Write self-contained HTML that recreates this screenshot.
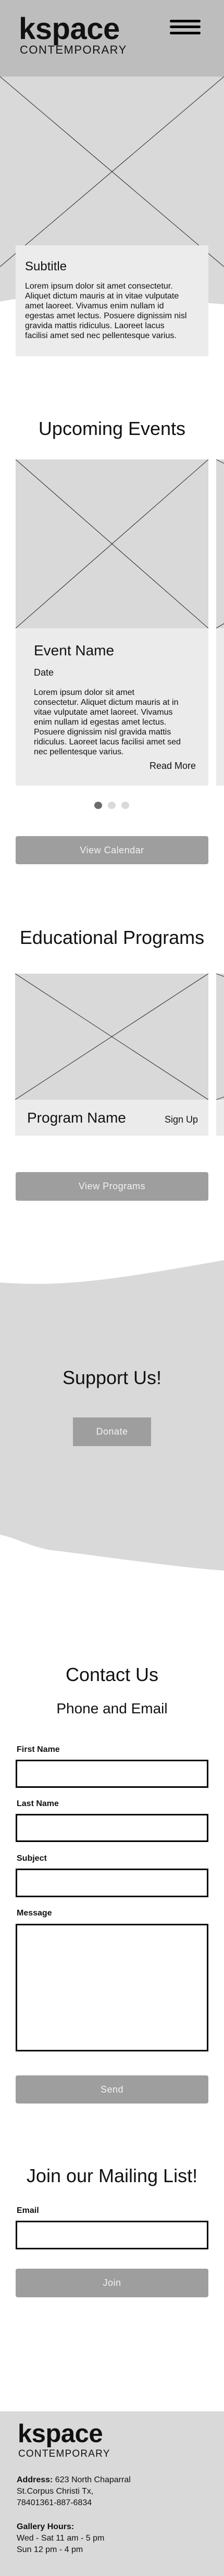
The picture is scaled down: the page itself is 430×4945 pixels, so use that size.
<!DOCTYPE html>
<html><head><meta charset="utf-8">
<style>
*{margin:0;padding:0;box-sizing:border-box}
body{width:430px;height:4945px;position:relative;background:#fff;font-family:"Liberation Sans",Arial,sans-serif;color:#111;overflow:hidden}
.a{position:absolute}
.h{position:absolute;left:0;width:430px;text-align:center;font-size:36px;line-height:1.2}
.lbl{position:absolute;left:32px;font-size:16px;font-weight:bold;line-height:1.2}
.inp{position:absolute;left:30px;width:370px;border:3px solid #000;background:#fff}
.btn{position:absolute;left:30px;width:370px;background:#9e9e9e;color:#f2f2f2;border-radius:4px;display:flex;align-items:center;justify-content:center;font-size:18px;letter-spacing:.5px}
.body16{font-size:16px;line-height:19px}
</style></head><body>

<!-- hero gray shape -->
<svg class="a" style="left:0;top:147px" width="430" height="445">
<path d="M0 0 H430 V437 C330 430 260 420 215 418 C150 416 60 420 0 432 Z" fill="#d9d9d9"/>
<line x1="0" y1="0" x2="430" y2="365" stroke="#222" stroke-width="1"/>
<line x1="430" y1="0" x2="0" y2="365" stroke="#222" stroke-width="1"/>
</svg>

<!-- header -->
<div class="a" style="left:0;top:0;width:430px;height:147px;background:#bdbdbd"></div>
<div class="a" style="left:36px;top:27px;font-size:58px;font-weight:bold;line-height:1;letter-spacing:-0.5px;color:#111">kspace</div>
<div class="a" style="left:38px;top:85px;font-size:22px;line-height:1;letter-spacing:1.5px;color:#111">CONTEMPORARY</div>
<div class="a" style="left:326px;top:38px;width:59px;height:5px;border-radius:3px;background:#000"></div>
<div class="a" style="left:326px;top:49px;width:59px;height:5px;border-radius:3px;background:#000"></div>
<div class="a" style="left:326px;top:61px;width:59px;height:5px;border-radius:3px;background:#000"></div>

<!-- hero card -->
<div class="a" style="left:30px;top:471px;width:370px;height:213px;background:#ececec"></div>
<div class="a" style="left:48px;top:498px;font-size:24px;line-height:1.2">Subtitle</div>
<div class="a body16" style="left:48px;top:540px;white-space:nowrap">Lorem ipsum dolor sit amet consectetur.<br>Aliquet dictum mauris at in vitae vulputate<br>amet laoreet. Vivamus enim nullam id<br>egestas amet lectus. Posuere dignissim nisl<br>gravida mattis ridiculus. Laoreet lacus<br>facilisi amet sed nec pellentesque varius.</div>

<!-- upcoming events -->
<div class="h" style="top:801px">Upcoming Events</div>
<svg class="a" style="left:30px;top:882px" width="370" height="324">
<rect width="370" height="324" fill="#d9d9d9"/>
<line x1="0" y1="0" x2="370" y2="324" stroke="#222"/><line x1="370" y1="0" x2="0" y2="324" stroke="#222"/>
</svg>
<div class="a" style="left:30px;top:1206px;width:370px;height:302px;background:#ebebeb"></div>
<svg class="a" style="left:415px;top:882px" width="15" height="324">
<rect width="15" height="324" fill="#d9d9d9"/>
<line x1="0" y1="0" x2="40" y2="20" stroke="#222"/><line x1="0" y1="324" x2="40" y2="300" stroke="#222"/>
</svg>
<div class="a" style="left:415px;top:1206px;width:15px;height:302px;background:#ebebeb"></div>
<div class="a" style="left:65px;top:1232px;font-size:28px;line-height:1.2">Event Name</div>
<div class="a" style="left:65px;top:1281px;font-size:18px;line-height:1.2">Date</div>
<div class="a body16" style="left:65px;top:1320px;white-space:nowrap">Lorem ipsum dolor sit amet<br>consectetur. Aliquet dictum mauris at in<br>vitae vulputate amet laoreet. Vivamus<br>enim nullam id egestas amet lectus.<br>Posuere dignissim nisl gravida mattis<br>ridiculus. Laoreet lacus facilisi amet sed<br>nec pellentesque varius.</div>
<div class="a" style="left:276px;width:100px;text-align:right;top:1460px;font-size:18px;line-height:1.2">Read More</div>
<div class="a" style="left:181px;top:1539px;width:15px;height:14px;border-radius:50%;background:#6b6b6b"></div>
<div class="a" style="left:207px;top:1539px;width:15px;height:14px;border-radius:50%;background:#d9d9d9"></div>
<div class="a" style="left:233px;top:1539px;width:15px;height:14px;border-radius:50%;background:#d9d9d9"></div>
<div class="btn" style="top:1605px;height:54px">View Calendar</div>

<!-- educational programs -->
<div class="h" style="top:1778px">Educational Programs</div>
<svg class="a" style="left:29px;top:1869px" width="371" height="242">
<rect width="371" height="242" fill="#d9d9d9"/>
<line x1="0" y1="0" x2="371" y2="242" stroke="#222"/><line x1="371" y1="0" x2="0" y2="242" stroke="#222"/>
</svg>
<div class="a" style="left:29px;top:2111px;width:371px;height:69px;background:#ebebeb"></div>
<svg class="a" style="left:415px;top:1869px" width="15" height="242">
<rect width="15" height="242" fill="#d9d9d9"/>
<line x1="0" y1="0" x2="40" y2="15" stroke="#222"/><line x1="0" y1="242" x2="40" y2="228" stroke="#222"/>
</svg>
<div class="a" style="left:415px;top:2111px;width:15px;height:69px;background:#ebebeb"></div>
<div class="a" style="left:52px;top:2129px;font-size:28px;line-height:1.2">Program Name</div>
<div class="a" style="left:280px;width:100px;text-align:right;top:2139px;font-size:18px;line-height:1.2">Sign Up</div>
<div class="btn" style="top:2250px;height:55px">View Programs</div>

<!-- support -->
<svg class="a" style="left:0;top:2410px" width="430" height="610">
<path d="M0 52 C120 60 200 50 430 9 V605 C330 598 180 575 100 566 C60 560 30 542 0 536 Z" fill="#d9d9d9"/>
</svg>
<div class="h" style="top:2623px">Support Us!</div>
<div class="a" style="left:140px;top:2721px;width:150px;height:55px;background:#9e9e9e;color:#f2f2f2;font-size:18px;display:flex;align-items:center;justify-content:center;letter-spacing:.5px">Donate</div>

<!-- contact -->
<div class="h" style="top:3193px">Contact Us</div>
<div class="h" style="top:3263px;font-size:28px">Phone and Email</div>
<div class="lbl" style="top:3349px">First Name</div>
<div class="inp" style="top:3378px;height:54px"></div>
<div class="lbl" style="top:3453px">Last Name</div>
<div class="inp" style="top:3482px;height:54px"></div>
<div class="lbl" style="top:3558px">Subject</div>
<div class="inp" style="top:3587px;height:55px"></div>
<div class="lbl" style="top:3663px">Message</div>
<div class="inp" style="top:3693px;height:245px"></div>
<div class="btn" style="top:3984px;height:54px">Send</div>

<!-- mailing -->
<div class="h" style="top:4155px">Join our Mailing List!</div>
<div class="lbl" style="top:4234px">Email</div>
<div class="inp" style="top:4263px;height:55px"></div>
<div class="btn" style="top:4355px;height:55px">Join</div>

<!-- footer -->
<div class="a" style="left:0;top:4629px;width:430px;height:316px;background:#d9d9d9"></div>
<div class="a" style="left:34px;top:4648px;font-size:49px;font-weight:bold;line-height:1;letter-spacing:-0.5px;color:#111">kspace</div>
<div class="a" style="left:35px;top:4701px;font-size:19px;line-height:1;letter-spacing:1.2px;color:#111">CONTEMPORARY</div>
<div class="a" style="left:32px;top:4750px;font-size:16px;line-height:22px;white-space:nowrap"><b>Address:</b> 623 North Chaparral<br>St.Corpus Christi Tx,<br>78401361-887-6834</div>
<div class="a" style="left:32px;top:4840px;font-size:16px;line-height:22px;white-space:nowrap"><b>Gallery Hours:</b><br>Wed - Sat 11 am - 5 pm<br>Sun 12 pm - 4 pm</div>

</body></html>
